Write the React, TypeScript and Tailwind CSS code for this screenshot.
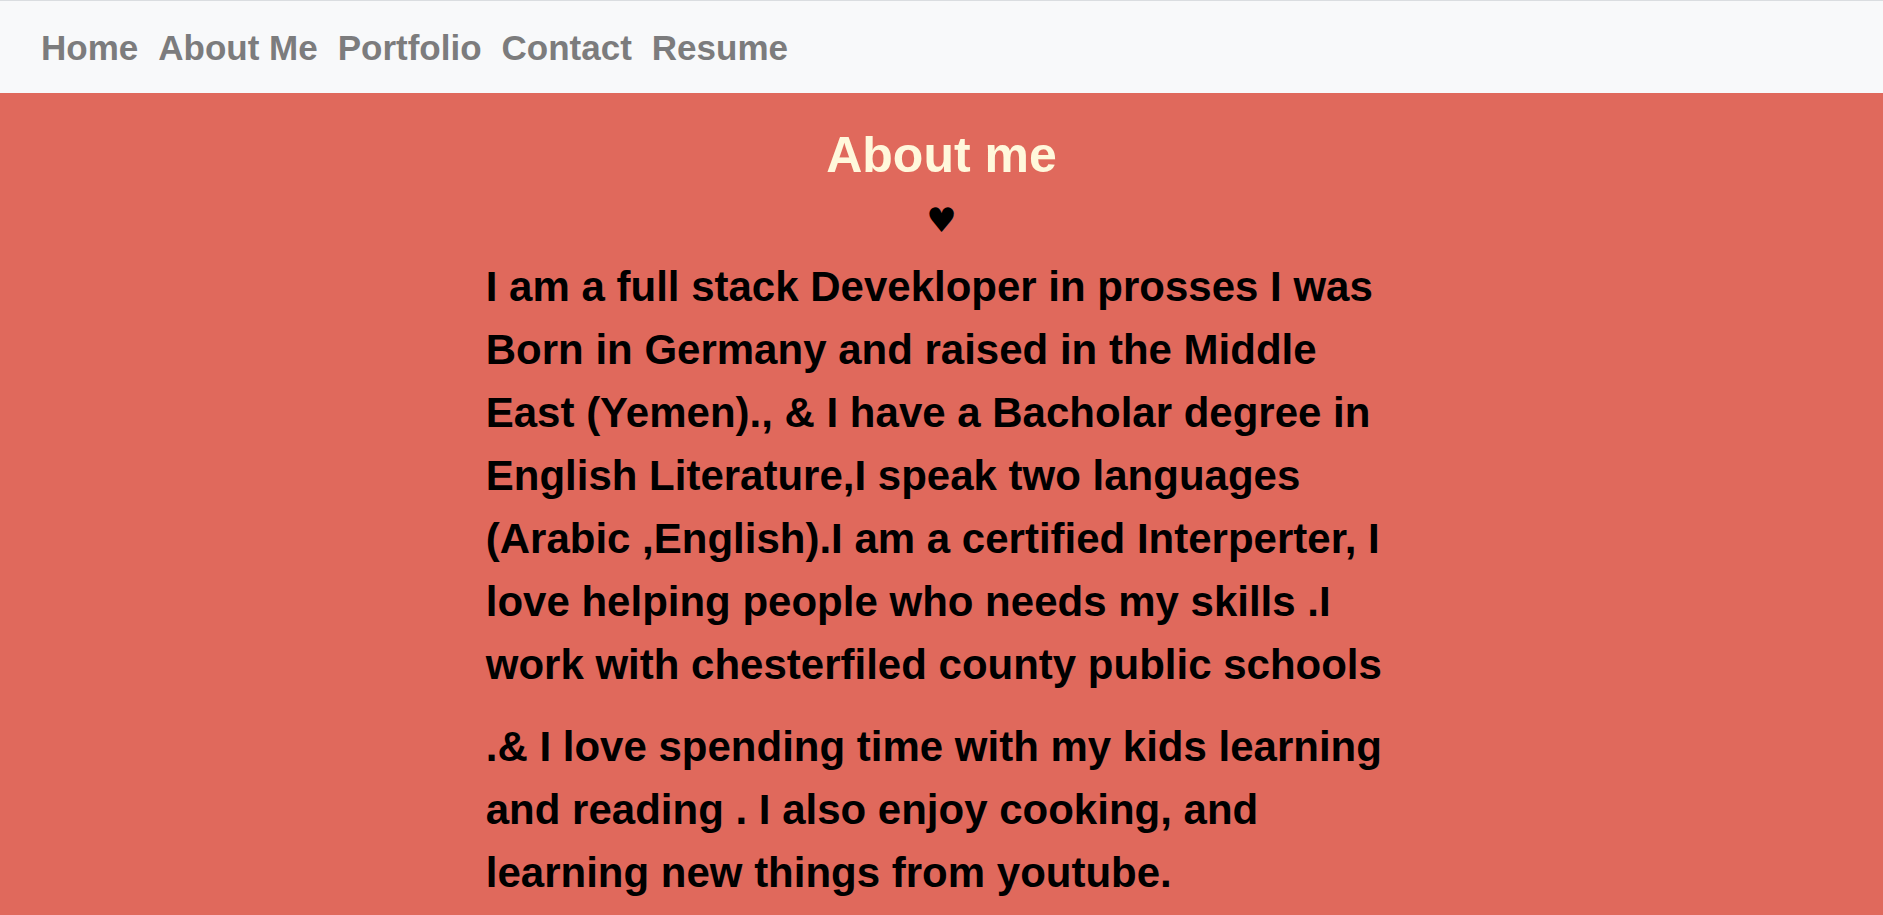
import React from "react";

export default function App() {
  const links = ["Home", "About Me", "Portfolio", "Contact", "Resume"];
  return (
    <div className="min-h-screen bg-[#e0695c] font-['Liberation_Sans',Arial,sans-serif]">
      <nav className="h-[93px] border-t border-[#dadde0] bg-[#f8f9fa] flex items-center pl-[41px] gap-[20px]">
        {links.map((l) => (
          <a key={l} href="#" className="text-[35px] font-bold text-[#7c7c7d] leading-none no-underline">
            {l}
          </a>
        ))}
      </nav>
      <section className="flex flex-col items-center pt-[32px]">
        <h1 className="text-[50px] leading-[60px] font-bold text-[#fff8dc] text-center">About me</h1>
        <div className="text-[34px] leading-[70px] text-black text-center font-['DejaVu_Sans',sans-serif]">♥</div>
        <div className="w-1/2 px-[15px] text-black font-bold text-[42px] leading-[1.5]">
          <p className="mb-[19px]">
            I am a full stack Devekloper in prosses I was Born in Germany and raised in the Middle East (Yemen)., &amp; I have a Bacholar degree in English Literature,I speak two languages (Arabic ,English).I am a certified Interperter, I love helping people who needs my skills .I work with chesterfiled county public schools
          </p>
          <p>
            .&amp; I love spending time with my kids learning and reading . I also enjoy cooking, and learning new things from youtube.
          </p>
        </div>
      </section>
    </div>
  );
}
